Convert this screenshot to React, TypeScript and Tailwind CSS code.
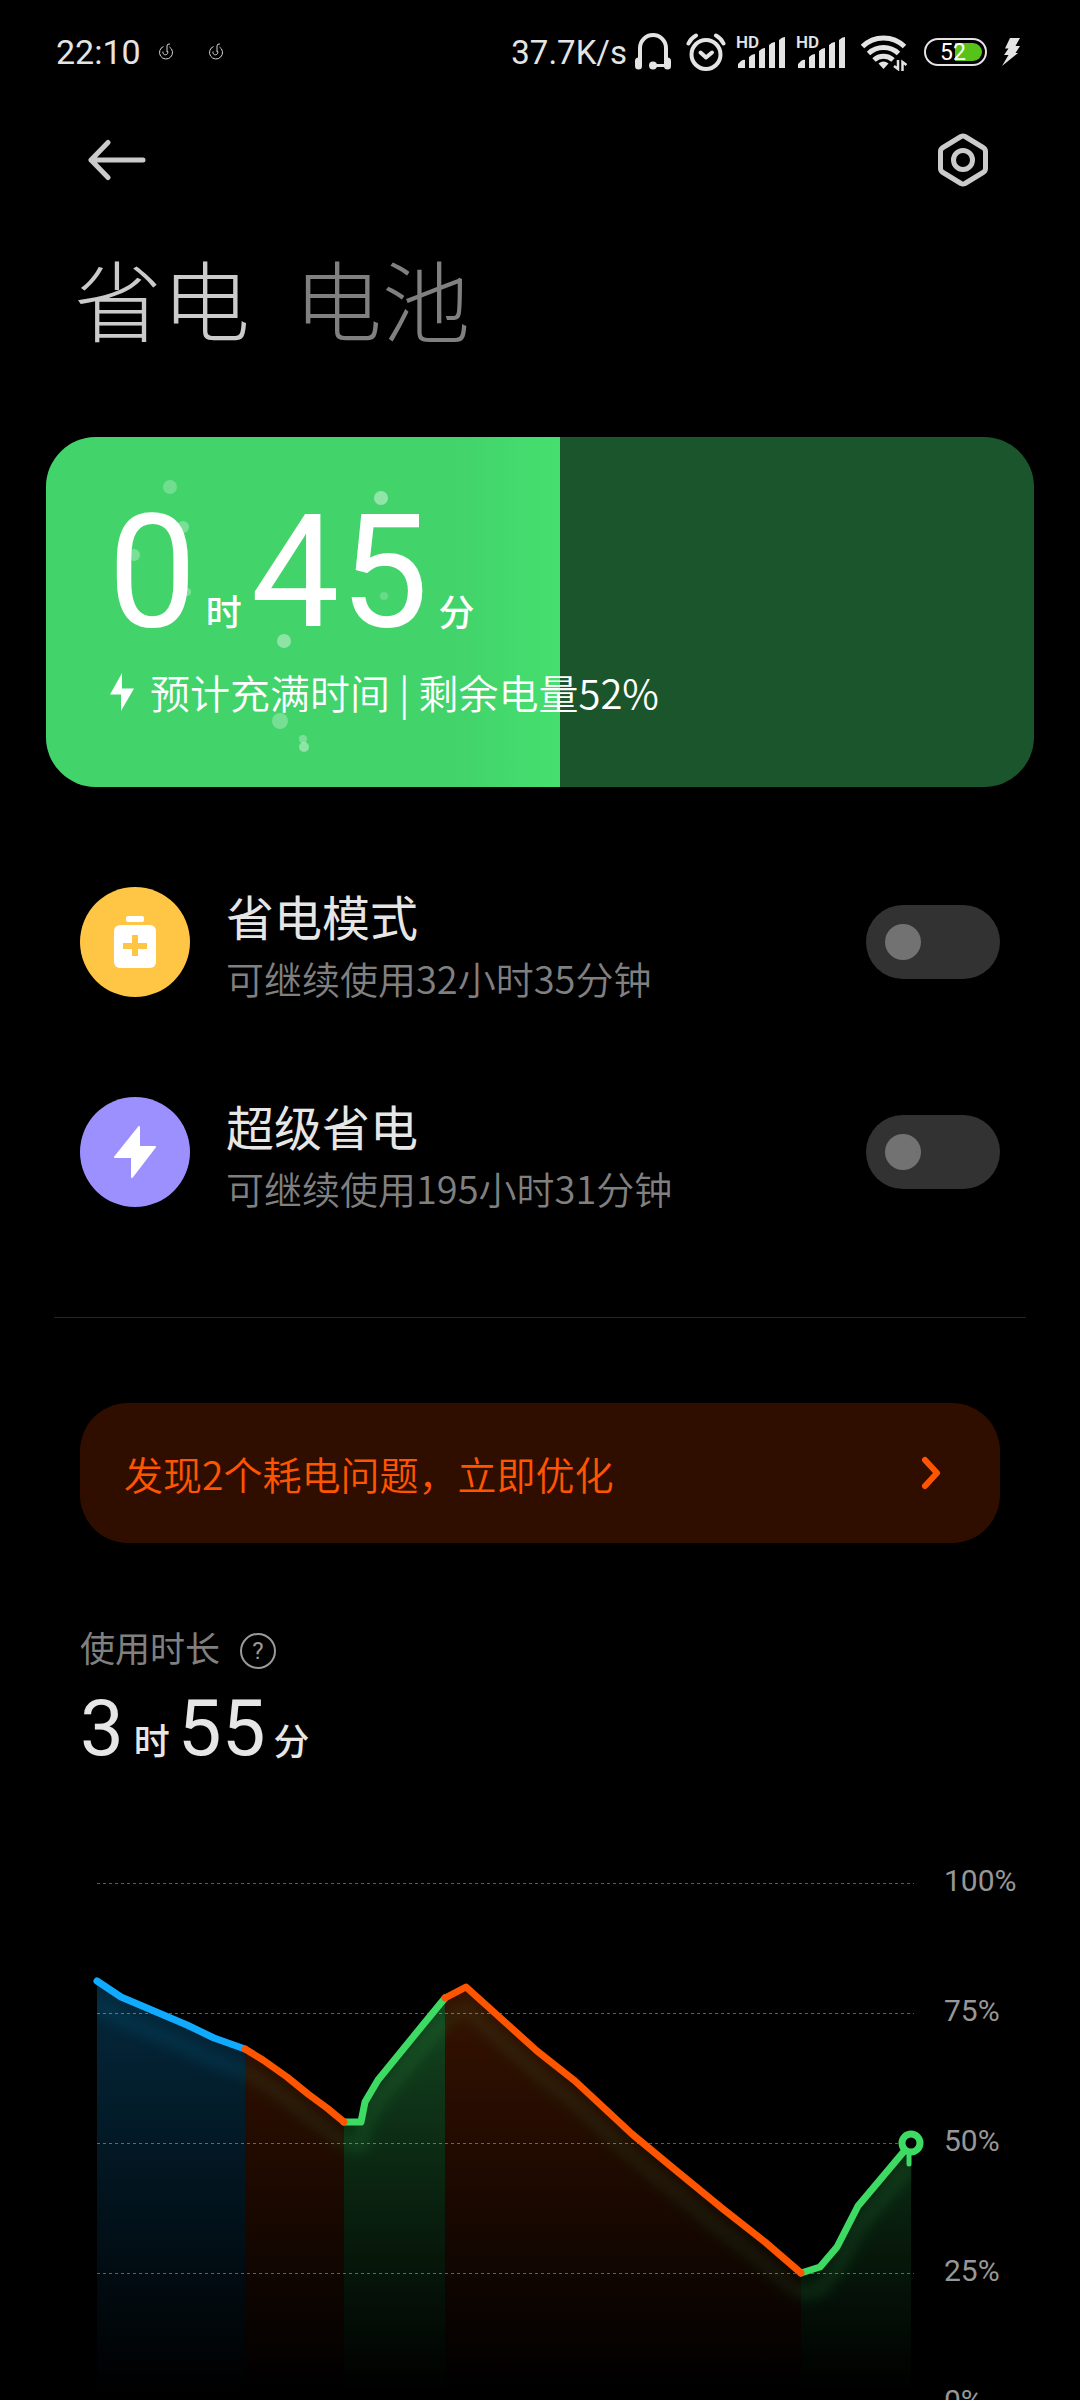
import React, { useState } from "react";

type Point = [number, number];
type Tone = "blue" | "orange" | "green";

const BASELINE = 587;

const segments: { tone: Tone; points: Point[] }[] = [
  { tone: "blue", points: [[17, 165], [41, 181], [107, 209], [134, 222], [165, 233]] },
  { tone: "green", points: [[264, 306], [281, 306], [285, 286], [298, 264], [342, 210], [365, 182]] },
  { tone: "green", points: [[721, 457], [740, 451], [757, 431], [778, 390], [831, 327]] },
  { tone: "orange", points: [[165, 233], [183, 244], [207, 261], [228, 278], [247, 292], [264, 306]] },
  {
    tone: "orange",
    points: [[365, 182], [386, 171], [457, 235], [495, 265], [552, 318], [593, 352], [643, 393], [685, 426], [721, 457]],
  },
];

const toneColor: Record<Tone, string> = { blue: "#10aaff", orange: "#ff5500", green: "#3ddb63" };
const glowColor: Record<Tone, string> = { blue: "#12a0d8", orange: "#2f9a40", green: "#3ddb63" };
const toneOpacity: Record<Tone, number> = { blue: 0.24, orange: 0.22, green: 0.33 };

const toPath = (points: Point[]) => points.map(([x, y]) => `${x},${y}`).join(" ");

const toArea = (points: Point[]) =>
  `${points[0][0]},${BASELINE} ${toPath(points)} ${points[points.length - 1][0]},${BASELINE}`;

function BatteryChart() {
  return (
    <div className="flex">
      <svg viewBox="0 0 850 650" className="min-w-0 flex-1" role="img" aria-label="电量变化">
        <defs>
          {(["blue", "orange", "green"] as Tone[]).map((tone) => (
            <linearGradient key={tone} id={`fill-${tone}`} gradientUnits="userSpaceOnUse" x1="0" y1="165" x2="0" y2="575">
              <stop offset="0" stopColor={toneColor[tone]} stopOpacity={toneOpacity[tone]} />
              <stop offset="1" stopColor={toneColor[tone]} stopOpacity="0" />
            </linearGradient>
          ))}
          <filter id="glow" x="-20%" y="-50%" width="140%" height="200%">
            <feGaussianBlur stdDeviation="6" />
          </filter>
          <clipPath id="plot">
            <rect x="17" y="0" width="815" height="650" />
          </clipPath>
        </defs>
        {segments.map((s, i) => (
          <polygon key={i} points={toArea(s.points)} fill={`url(#fill-${s.tone})`} />
        ))}
        <g clipPath="url(#plot)">
          {segments.map((s, i) => (
            <polyline
              key={i}
              points={toPath(s.points)}
              transform="translate(0 22)"
              fill="none"
              stroke={glowColor[s.tone]}
              strokeOpacity="0.1"
              strokeWidth="16"
              filter="url(#glow)"
            />
          ))}
        </g>
        {[67, 197, 327, 457, 587].map((y) => (
          <line key={y} x1="17" x2="834" y1={y + 0.5} y2={y + 0.5} stroke="#fff" strokeOpacity="0.36" strokeDasharray="3 3" />
        ))}
        {segments.map((s, i) => (
          <polyline
            key={i}
            points={toPath(s.points)}
            fill="none"
            stroke={toneColor[s.tone]}
            strokeWidth="7"
            strokeLinecap="round"
            strokeLinejoin="round"
          />
        ))}
        <path d="M829 334v14" stroke="#3ddb63" strokeWidth="5" strokeLinecap="round" />
        <circle cx="831" cy="327" r="9" fill="#000" stroke="#3ddb63" strokeWidth="7" />
      </svg>
      <ul className="w-[150px] shrink-0 pl-[14px] text-[30px] leading-[130px] text-[#979797]">
        {["100%", "75%", "50%", "25%", "0%"].map((l) => (
          <li key={l}>{l}</li>
        ))}
      </ul>
    </div>
  );
}

function AppNoticeIcon() {
  return (
    <svg viewBox="0 0 16 18" className="h-[18px] w-4" fill="none" stroke="#d5d5d5">
      <path d="M12 1q-3-.5-3 2v6" />
      <path d="M5 8.500a2.500 2.500 0 1 0 4.500-.500" />
      <path d="M5.500 3.500a6.500 6.500 0 1 0 6 .500" />
    </svg>
  );
}

function HeadsetIcon() {
  return (
    <svg viewBox="0 0 38 38" className="size-[38px]" fill="none" stroke="#e4e4e4">
      <path d="M6 27V15a13 13 0 0 1 26 0v12" strokeWidth="4" />
      <path d="M4.500 28v5M33.500 28v5" strokeWidth="7" strokeLinecap="round" />
      <path d="M19 32.500h14" strokeWidth="3" />
      <circle cx="19" cy="32.500" r="4" fill="#e4e4e4" stroke="none" />
    </svg>
  );
}

function AlarmIcon() {
  return (
    <svg viewBox="0 0 40 40" className="size-10" fill="none" stroke="#e4e4e4" strokeWidth="4" strokeLinecap="round">
      <circle cx="20" cy="22.500" r="14.500" />
      <path d="M14.500 20.500l5.500 5 6-5" strokeLinejoin="round" />
      <path d="M2.500 11.500a18 18 0 0 1 7.500-8M37.500 11.500a18 18 0 0 0-7.500-8" />
    </svg>
  );
}

function SignalIcon() {
  return (
    <svg viewBox="0 0 50 44" className="h-11 w-[50px]" fill="#e4e4e4">
      <text x="0" y="18" fontSize="17" fontWeight="600">
        HD
      </text>
      <path d="M2 34l3-3q3-2 4-1V38H2zM13 27q3-3 6-3V38h-6zM23 21q3-3 6-3V38h-6zM33 15q3-3 6-3V38h-6zM43 10q3-3 6-3V38h-6z" />
    </svg>
  );
}

function WifiIcon() {
  return (
    <svg viewBox="0 0 48 38" className="h-[38px] w-12" fill="none" stroke="#e4e4e4" strokeWidth="5">
      <path d="M2.500 13.500a30 30 0 0 1 42 0" />
      <path d="M8.500 20.500a22 22 0 0 1 30 0" />
      <path d="M14 27a14 14 0 0 1 19 0" />
      <path d="M23.500 36l-5-5.500a8 8 0 0 1 10 0z" fill="#e4e4e4" stroke="none" />
      <path d="M38 27v9l-4-3M42.500 38v-9l4 3" strokeWidth="2.500" />
    </svg>
  );
}

function StatusBar() {
  return (
    <div className="flex h-[104px] items-center justify-between pl-14 pr-[60px] text-[34px] leading-none text-[#e4e4e4]">
      <div className="flex items-center">
        <span className="w-[102px]">22:10</span>
        <AppNoticeIcon />
        <span className="w-[34px]" />
        <AppNoticeIcon />
      </div>
      <div className="flex items-center">
        <span className="mr-[7px] text-[33px]">37.7K/s</span>
        <HeadsetIcon />
        <span className="flex items-center gap-[10px] px-[14px]">
          <AlarmIcon />
          <SignalIcon />
          <SignalIcon />
        </span>
        <WifiIcon />
        <span className="relative ml-4 flex h-7 w-[63px] items-center rounded-full border-2 border-[#e4e4e4] p-[3px]">
          <span className="ml-auto h-[18px] w-[27px] rounded-r-full bg-[#57c319]" />
          <span className="absolute left-[14px] text-[23px] leading-none text-white">52</span>
        </span>
        <svg viewBox="0 0 18 28" className="ml-[15px] h-7 w-[18px]" fill="#e4e4e4">
          <path d="M8 0h10l-4.500 8H18l-4.500 7H16L0 28l6.500-11H2l4.500-6.500H3z" />
        </svg>
      </div>
    </div>
  );
}

const bubbles: [number, number, number, number][] = [
  [124, 50, 7, 0.25],
  [335, 61, 7, 0.42],
  [137, 90, 6, 0.3],
  [88, 118, 6, 0.3],
  [141, 155, 4, 0.3],
  [338, 159, 4, 0.2],
  [238, 204, 7, 0.4],
  [234, 284, 8, 0.28],
  [257, 302, 4, 0.3],
  [258, 310, 5, 0.4],
];

function ChargeCard() {
  return (
    <section className="relative mx-[46px] mt-[82px] h-[350px] overflow-hidden rounded-[50px] bg-[#1b552b] text-white">
      <div className="absolute inset-y-0 left-0 w-[52%] bg-linear-to-r from-[#42d36a] from-80% to-[#46df6f]" />
      <svg viewBox="0 0 514 350" className="absolute left-0 top-0 h-[350px] w-[514px]" fill="#fff" aria-hidden="true">
        {bubbles.map(([x, y, r, o]) => (
          <circle key={`${x}-${y}`} cx={x} cy={y} r={r} fillOpacity={o} />
        ))}
      </svg>
      <div className="relative pl-[62px] pt-[55px]">
        <p className="flex items-baseline text-[158px] leading-[160px]">
          <span>0</span>
          <span className="mx-[9px] text-[36px] font-medium leading-none">时</span>
          <span>45</span>
          <span className="ml-[10px] text-[36px] font-medium leading-none">分</span>
        </p>
        <p className="mt-3 flex items-center font-['Noto_Sans_CJK_SC',sans-serif] text-[40px] font-[350] leading-[56px]">
          <svg viewBox="0 0 26 38" className="mr-4 h-[38px] w-[26px]" fill="#fff">
            <path d="M14 0v15.500h12L13 38V21.500H2z" />
          </svg>
          预计充满时间 | 剩余电量52%
        </p>
      </div>
    </section>
  );
}

function BatteryPlusIcon() {
  return (
    <svg viewBox="0 0 42 52" className="h-[52px] w-[42px]">
      <rect x="12" width="18" height="6" rx="2" fill="#fff" />
      <rect y="9" width="42" height="43" rx="6" fill="#fff" />
      <path d="M21 19v21M9 30h24" stroke="#ffc544" strokeWidth="6" />
    </svg>
  );
}

function BoltIcon() {
  return (
    <svg viewBox="0 0 42 52" className="h-[52px] w-[42px]" fill="#fff" stroke="#fff" strokeWidth="2" strokeLinejoin="round">
      <path d="M25 1v20h16L18 51V31H1z" />
    </svg>
  );
}

function ModeRow(props: { id: string; title: string; detail: string; circle: string; icon: React.ReactNode }) {
  const [on, setOn] = useState(false);
  return (
    <li>
      <label htmlFor={props.id} className="flex h-[210px] items-center">
        <span className={`flex size-[110px] shrink-0 items-center justify-center rounded-full ${props.circle}`}>{props.icon}</span>
        <span className="ml-9 flex flex-1 flex-col pt-[2px] font-['Noto_Sans_CJK_SC',sans-serif]">
          <span className="text-[48px] leading-[70px] text-[#e6e6e6]">{props.title}</span>
          <span className="text-[38px] font-[350] leading-[56px] text-[#808080]">{props.detail}</span>
        </span>
        <input
          id={props.id}
          type="checkbox"
          role="switch"
          checked={on}
          onChange={(e) => setOn(e.target.checked)}
          className="flex h-[74px] w-[134px] shrink-0 appearance-none items-center rounded-full bg-[#323232] px-[19px] before:size-9 before:rounded-full before:bg-[#727272] checked:justify-end checked:bg-[#42d36a] checked:before:bg-white"
        />
      </label>
    </li>
  );
}

export default function App() {
  return (
    <div className="flex h-screen flex-col bg-black font-[Roboto,'Noto_Sans_CJK_SC',sans-serif]">
      <StatusBar />
      <header className="flex h-28 shrink-0 items-center justify-between pl-[88px] pr-[90px]">
        <button type="button" aria-label="返回">
          <svg viewBox="0 0 58 42" className="h-[42px] w-[58px]" fill="none" stroke="#cbcbcb" strokeWidth="5" strokeLinecap="round" strokeLinejoin="round">
            <path d="M55 21H3M20 3.500L3 21l17 17.500" />
          </svg>
        </button>
        <button type="button" aria-label="设置">
          <svg viewBox="0 0 54 56" className="h-14 w-[54px]" fill="none" stroke="#cbcbcb" strokeWidth="5" strokeLinejoin="round">
            <path d="M25 4.500q2-1 4 0l18 11q2.500 1.500 2.500 4v17q0 2.500-2.500 4l-18 11q-2 1-4 0l-18-11q-2.500-1.500-2.500-4v-17q0-2.500 2.500-4z" />
            <circle cx="27" cy="28" r="9.500" />
          </svg>
        </button>
      </header>
      <main className="min-h-0 flex-1 overflow-y-auto [scrollbar-width:none]">
        <div role="tablist" className="mt-[39px] flex gap-11 px-[74px] text-[88px] font-light leading-[100px]">
          <button type="button" role="tab" aria-selected="true" className="text-[#cbcbcb]">
            省电
          </button>
          <button type="button" role="tab" aria-selected="false" className="text-[#808080]">
            电池
          </button>
        </div>
        <ChargeCard />
        <ul className="mt-[50px] px-20">
          <ModeRow id="saver" title="省电模式" detail="可继续使用32小时35分钟" circle="bg-[#ffc544]" icon={<BatteryPlusIcon />} />
          <ModeRow id="ultra" title="超级省电" detail="可继续使用195小时31分钟" circle="bg-[#9c90ff]" icon={<BoltIcon />} />
        </ul>
        <hr className="mx-[54px] mt-[60px] border-[#232323]" />
        <div className="mt-[85px] px-20">
          <button
            type="button"
            className="flex h-[140px] w-full items-center justify-between rounded-[48px] bg-[#2f0e00] pl-11 pr-[58px] text-[#ff5500]"
          >
            <span className="font-['Noto_Sans_CJK_SC',sans-serif] text-[39px] font-[350] leading-[60px]">发现2个耗电问题，立即优化</span>
            <svg viewBox="0 0 22 34" className="h-[34px] w-[22px]" fill="none" stroke="#ff5500" strokeWidth="6" strokeLinecap="round" strokeLinejoin="round">
              <path d="M5 4l12 13L5 30" />
            </svg>
          </button>
        </div>
        <section className="mt-[84px]">
          <h2 className="flex items-center gap-5 px-20 text-[35px] leading-[48px] text-[#808080]">
            使用时长
            <button type="button" aria-label="说明" className="flex size-9 items-center justify-center rounded-full border-2 border-[#9a9a9a] text-[24px] leading-none text-[#9a9a9a]">
              ?
            </button>
          </h2>
          <p className="mt-[6px] flex items-baseline px-20 text-[78px] leading-[96px] text-[#e6e6e6]">
            <span>3</span>
            <span className="ml-[10px] mr-2 text-[36px] font-medium leading-none">时</span>
            <span>55</span>
            <span className="ml-2 text-[36px] font-medium leading-none">分</span>
          </p>
          <div className="mt-[39px] pl-20">
            <BatteryChart />
          </div>
        </section>
      </main>
    </div>
  );
}
